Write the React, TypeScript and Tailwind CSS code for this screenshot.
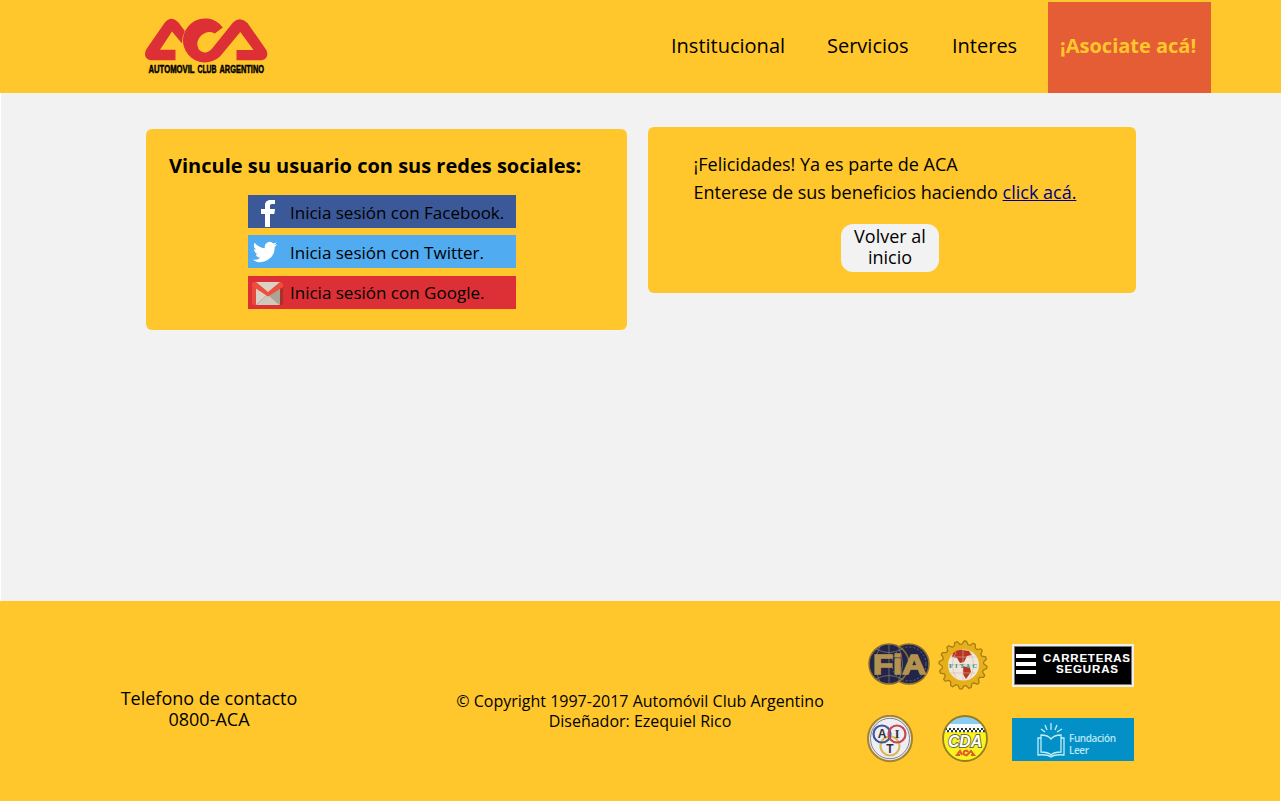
import React from "react";

function AcaLogo() {
  return (
    <svg width="124" height="58" viewBox="144 17 124 58" className="overflow-visible" role="img" aria-label="ACA">
      <g fill="#dc3036">
        <path d="M182 43.500 172 31.500 160 49.700H175.500V60.300H152C145 60.300 143.500 54 146.500 49L164.500 23Q171.500 15 178.500 22.500L184.800 31Q182 36.500 182 43.500Z" />
        <path d="M222.800 27.500A22 22 0 1 0 220 56.500L240.300 32 253.500 50H236.500V60.300H260C267 60.300 269 54.500 266 49.500L247.500 23Q240 16 233 22.500L212.500 48C208 54 202 53.500 198.500 49A12 12 0 0 1 214.800 33.500Z" />
      </g>
      <g fontFamily="Liberation Sans Narrow, Liberation Sans, sans-serif" fontWeight="700" fontSize="10.500" stroke="#000" strokeWidth=".5">
        <text x="148.500" y="73" textLength="46" lengthAdjust="spacingAndGlyphs">AUTOMOVIL</text>
        <text x="197.500" y="73" textLength="19" lengthAdjust="spacingAndGlyphs">CLUB</text>
        <text x="219.500" y="73" textLength="44.500" lengthAdjust="spacingAndGlyphs">ARGENTINO</text>
      </g>
    </svg>
  );
}

function FacebookIcon() {
  return (
    <svg width="35" height="33" viewBox="0 0 35 33" className="shrink-0">
      <path fill="#fff" d="M17 32V19h-4v-5h4v-3.500C17 6.500 19.500 5 23 5h4v4h-3c-1.500 0-2 .7-2 2.300V14h5l-.7 5H22v13z" />
    </svg>
  );
}

function TwitterIcon() {
  return (
    <svg width="35" height="33" viewBox="0 0 35 33" className="shrink-0">
      <path transform="translate(5 4.500) scale(1.010 1.040)" fill="#fff" d="M24 4.600a10 10 0 0 1-2.800.8 5 5 0 0 0 2.100-2.700c-1 .6-2 1-3.100 1.200a4.900 4.900 0 0 0-8.400 4.500C7.700 8.200 4.100 6.200 1.700 3.200a4.900 4.900 0 0 0 1.500 6.500 5 5 0 0 1-2.200-.6c0 2.300 1.600 4.400 3.900 4.900-.7.200-1.500.2-2.200.1a4.900 4.900 0 0 0 4.600 3.400A9.900 9.900 0 0 1 0 19.500 14 14 0 0 0 21.500 7.100 10 10 0 0 0 24 4.600z" />
    </svg>
  );
}

function GmailIcon() {
  return (
    <svg width="35" height="33" viewBox="0 0 35 33" className="shrink-0">
      <path fill="#d9d2c5" d="M7 6h26v23H7z" />
      <path fill="#aaa397" d="M20 20 33 10v19H31z" />
      <path fill="#cfc7ba" d="M8 29 20 19l11 10z" />
      <path fill="none" stroke="#a59d90" strokeWidth=".7" d="m8 29 11-10" />
      <path fill="#e84b3c" d="M4 7h4v22H6a2 2 0 0 1-2-2z" />
      <path fill="#a93126" d="M32 9h3v18a2 2 0 0 1-2 2h-1z" />
      <path fill="#ee4e3c" d="M4 8 6 6h2l12 10L32 6h1l2 2v3L20 20.500 4 10z" />
    </svg>
  );
}

function FiaLogo() {
  return (
    <svg width="62" height="44" viewBox="0 0 62 44">
      <g fill="#22244a" stroke="#8a6d31" strokeWidth="1.500">
        <circle cx="41" cy="21" r="20" />
        <circle cx="21" cy="21" r="20" />
      </g>
      <g fill="none" stroke="#8c816b" strokeWidth=".7">
        <path d="M21 1v40M8 6q13 7 26 0M8 36q13-7 26 0M12 3q-9 18 0 36M30 3q9 18 0 36" />
        <circle cx="41" cy="21" r="17" strokeDasharray="2 2" />
      </g>
      <text x="5" y="31" fill="#b3934e" stroke="#b3934e" strokeWidth="1.500" fontFamily="Liberation Sans, sans-serif" fontWeight="700" fontSize="28" textLength="53" lengthAdjust="spacingAndGlyphs">FiA</text>
    </svg>
  );
}

const gearPoints = Array.from({ length: 64 }, (_, i) => {
  const radius = i % 4 < 2 ? 24 : 20.800;
  const angle = ((i + 0.5) / 64) * Math.PI * 2;
  return `${(25 + radius * Math.cos(angle)).toFixed(1)},${(25 + radius * Math.sin(angle)).toFixed(1)}`;
}).join(" ");

function FitacLogo() {
  return (
    <svg width="50" height="50" viewBox="0 0 50 50">
      <polygon points={gearPoints} fill="#e6b01d" stroke="#a77e12" strokeWidth="1.300" />
      <circle cx="25.500" cy="25" r="15.500" fill="#f1e6dc" />
      <path fill="#b83420" d="M15 13q5-4 10-3l6 1 3 4-5 1-3 6-4 1-3-5-5-1zM25 26l7 2 1 4-5 7-3-5z" />
      <path fill="none" stroke="#d2b9a8" strokeWidth=".6" d="M10 25h30M13 17h24M13 33h24M25 10v30M18 12q-7 13 0 26M32 12q7 13 0 26" />
      <text x="11" y="28" fill="#259382" fontFamily="Liberation Serif, serif" fontWeight="700" fontSize="6.500" textLength="28">FITAC</text>
    </svg>
  );
}

function CarreterasLogo() {
  return (
    <svg width="122" height="43" viewBox="0 0 122 43">
      <path fill="#eee" d="M0 0h122v43H0z" />
      <path fill="#000" stroke="#777" d="M2.500 2.500h117v38h-117z" />
      <path fill="#fff" d="M4 10h20v4H4zM4 18h20v4H4zM4 26h20v4H4z" />
      <g fill="#fff" stroke="#fff" strokeWidth=".1" fontFamily="Liberation Sans, sans-serif" fontWeight="700" fontSize="11.500">
        <text x="31" y="17.500" textLength="87" lengthAdjust="spacing">CARRETERAS</text>
        <text x="44" y="29.200" textLength="62" lengthAdjust="spacing">SEGURAS</text>
      </g>
    </svg>
  );
}

function AitLogo() {
  return (
    <svg width="46" height="48" viewBox="0 0 46 48">
      <ellipse cx="23" cy="23.500" rx="22" ry="22.700" fill="#e7e7ed" stroke="#a38332" strokeWidth="2" />
      <ellipse cx="23" cy="23.500" rx="19.500" ry="20.200" fill="#eeeef4" stroke="#85858d" />
      <g fill="none" strokeWidth="2.200">
        <circle cx="23" cy="31" r="9.500" stroke="#d8b85a" />
        <circle cx="15" cy="19" r="8.500" stroke="#3e5795" />
        <circle cx="30" cy="19" r="8.500" stroke="#c74750" />
      </g>
      <g fill="#30333c" fontFamily="Liberation Sans, sans-serif" fontWeight="700" fontSize="12" textAnchor="middle">
        <text x="15" y="23">A</text>
        <text x="30" y="23" fontFamily="Liberation Serif, serif">I</text>
        <text x="23" y="37.500">T</text>
      </g>
    </svg>
  );
}

function CdaLogo() {
  return (
    <svg width="46" height="48" viewBox="0 0 46 48">
      <ellipse cx="23" cy="23.500" rx="22" ry="22.500" fill="#f9f320" />
      <path fill="#8bcdf0" d="M2 17Q6 2 23 1q17 1 21 16z" />
      <path fill="#f4fbff" d="M6 9h34l3 8H3z" />
      <path stroke="#39382e" strokeWidth="2.200" strokeDasharray="2 2" d="M3 14h40" />
      <path stroke="#39382e" strokeWidth="2.200" strokeDasharray="2 2" strokeDashoffset="1" d="M2 16.200h42" />
      <text x="6" y="32" fill="#fff" stroke="#6a6a3c" strokeWidth="1.800" paintOrder="stroke" fontFamily="Liberation Sans, sans-serif" fontWeight="700" fontStyle="italic" fontSize="16" textLength="34" lengthAdjust="spacingAndGlyphs">CDA</text>
      <path fill="none" stroke="#e4572e" strokeWidth="2" d="M20 40l-2-4-3 4h3M26 37a2.300 2.300 0 1 0-1 3l4-4 3 4h-3" />
      <ellipse cx="23" cy="23.500" rx="22" ry="22.500" fill="none" stroke="#947d21" strokeWidth="1.800" />
    </svg>
  );
}

function FundacionLogo() {
  return (
    <svg width="122" height="43" viewBox="0 0 122 43">
      <path fill="#0390c7" d="M0 0h122v43H0z" />
      <g fill="none" stroke="#c2edf7" strokeWidth="1.300">
        <path d="M29 17q7 0 10 4 3-4 10-4v17q-7 0-10 3-3-3-10-3zM29 20h-3v17q9-1 13 2 4-3 13-2V20h-3" />
        <path d="m29 11 4 3M33 7l2 5M39 5v7M45 7l-2 5M50 11l-5 3" />
      </g>
      <g fill="#b9e7f5" fontFamily="Open Sans, sans-serif" fontWeight="600" fontSize="10">
        <text x="57" y="24" textLength="47">Fundación</text>
        <text x="57" y="35.500" textLength="20">Leer</text>
      </g>
    </svg>
  );
}

const logins = [
  { name: "Facebook", color: "bg-[#3b5998]", Icon: FacebookIcon },
  { name: "Twitter", color: "mt-[7px] bg-[#50abf1]", Icon: TwitterIcon },
  { name: "Google", color: "mt-2 bg-[#dc3036]", Icon: GmailIcon },
];

export default function App() {
  return (
    <div className="flex h-[801px] w-[1281px] flex-col overflow-hidden bg-white font-['Open_Sans',sans-serif] text-black">
      <header className="flex h-[93px] shrink-0 justify-between bg-[#ffc72c] pl-36 pr-[70px]">
        <a href="#" className="mt-[17px] h-[58px]"><AcaLogo /></a>
        <nav className="flex pt-0.5 text-xl leading-[88px] whitespace-nowrap">
          <a href="#" className="w-[156px]">Institucional</a>
          <a href="#" className="w-[125px]">Servicios</a>
          <a href="#" className="w-24">Interes</a>
          <a href="#" className="w-[163px] bg-[#e55d35] pl-3 font-bold text-[#ffc72c]">¡Asociate acá!</a>
        </nav>
      </header>

      <main className="ml-px flex h-[508px] shrink-0 items-start bg-[#f2f2f2] pl-[145px]">
        <section className="mt-9 flex h-[201px] w-[481px] flex-col rounded-md bg-[#ffc72c] pt-[23px]">
          <h1 className="pl-[23px] text-xl leading-7 font-bold">Vincule su usuario con sus redes sociales:</h1>
          <div className="mt-[15px] ml-[102px] flex w-[268px] flex-col">
            {logins.map(({ name, color, Icon }) => (
              <a key={name} href="#" className={`flex h-[33px] items-center ${color}`}>
                <Icon />
                <span className={`pl-[7px] text-[17px] leading-6 whitespace-nowrap ${name === "Google" ? "pt-px" : "pt-[3px]"}`}>Inicia sesión con {name}.</span>
              </a>
            ))}
          </div>
        </section>
        <section className="mt-[34px] ml-[21px] h-[166px] w-[488px] rounded-md bg-[#ffc72c] pt-[23px]">
          <p className="pl-[45.500px] text-lg leading-7 whitespace-nowrap">
            ¡Felicidades! Ya es parte de ACA<br />
            Enterese de sus beneficios haciendo <a href="#" className="text-[#000080] underline underline-offset-1">click acá.</a>
          </p>
          <button className="mt-[18px] ml-[193px] flex h-12 w-[98px] justify-center rounded-xl bg-[#f2f2f2] px-2 pt-0.5 text-lg leading-[21px]">Volver al inicio</button>
        </section>
      </main>

      <footer className="mr-px flex h-[200px] shrink-0 bg-[#ffc72c]">
        <p className="mt-[87px] ml-[109px] w-[200px] text-center text-lg leading-[21px]">Telefono de contacto<br />0800-ACA</p>
        <p className="mt-[90px] ml-[131px] w-[400px] text-center text-base leading-5">© Copyright 1997-2017 Automóvil Club Argentino<br />Diseñador: Ezequiel Rico</p>
        <div className="mt-[39px] ml-[27px] flex w-[267px] flex-col gap-[25px]">
          <div className="flex h-[50px]">
            <div className="mt-[3px] ml-px w-[70px]"><FiaLogo /></div>
            <div className="w-[74px]"><FitacLogo /></div>
            <div className="mt-1"><CarreterasLogo /></div>
          </div>
          <div className="flex h-12">
            <div className="w-[75px]"><AitLogo /></div>
            <div className="w-[70px]"><CdaLogo /></div>
            <div className="mt-[3px]"><FundacionLogo /></div>
          </div>
        </div>
      </footer>
    </div>
  );
}
